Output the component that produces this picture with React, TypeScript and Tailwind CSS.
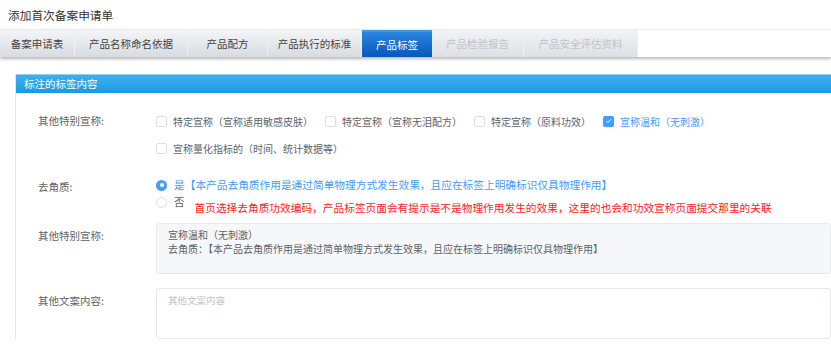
import React from "react";

const tabs: { label: string; w: string; state: "normal" | "active" | "disabled" }[] = [
  { label: "备案申请表", w: "w-[75px]", state: "normal" },
  { label: "产品名称命名依据", w: "w-[113px]", state: "normal" },
  { label: "产品配方", w: "w-[80px]", state: "normal" },
  { label: "产品执行的标准", w: "w-[94px]", state: "normal" },
  { label: "产品标签", w: "w-[70px]", state: "active" },
  { label: "产品检验报告", w: "w-[92px]", state: "disabled" },
  { label: "产品安全评估资料", w: "w-[114px]", state: "disabled" },
];

function Checkbox({ checked, label }: { checked?: boolean; label: string }) {
  return (
    <div className="flex items-center gap-[6px]">
      {checked ? (
        <span className="w-[11px] h-[11px] rounded-[2px] bg-[#409eff] flex items-center justify-center">
          <svg width="7" height="6" viewBox="0 0 7 6">
            <path d="M1 3 L2.8 4.7 L6 1.2" stroke="white" strokeWidth="1" fill="none" />
          </svg>
        </span>
      ) : (
        <span className="w-[11px] h-[11px] rounded-[2px] border border-[#dcdfe6] bg-white" />
      )}
      <span className={checked ? "text-[#409eff]" : "text-[#606266]"}>{label}</span>
    </div>
  );
}

export default function App() {
  return (
    <div
      className="w-[831px] h-[354px] overflow-hidden bg-white"
      style={{ fontFamily: '"Noto Sans CJK SC", "Noto Sans", sans-serif' }}
    >
      <div className="h-[29px] pl-[8px] flex items-center text-[11.7px] text-[#333]">添加首次备案申请单</div>
      <div className="h-[28px] flex border-t border-[#ececec] shadow-[0_2px_3px_rgba(0,0,0,0.28)]">
        {tabs.map((t) => (
          <div
            key={t.label}
            className={
              t.state === "active"
                ? `${t.w} flex items-center justify-center text-[10.5px] text-white bg-gradient-to-b from-[#2a86dc] to-[#0756bd] border-t-2 border-[#3a9ae8]`
                : t.state === "disabled"
                ? `${t.w} flex items-center justify-center text-[10.5px] text-[#bfc3c8] bg-gradient-to-b from-[#f1f3f6] to-[#dde0e4] border-r border-[#eef0f3]`
                : `${t.w} flex items-center justify-center text-[10.5px] text-[#444] bg-gradient-to-b from-[#f4f5f7] to-[#d8dbe0] border-r border-[#eef0f3]`
            }
          >
            {t.label}
          </div>
        ))}
        <div className="flex-1 bg-white" />
      </div>

      <div className="mt-[17px] ml-[15px] border-l border-[#e3e6ea]">
        <div className="h-[19px] flex items-center pl-[8px] text-[10.5px] text-white bg-gradient-to-b from-[#3eaeee] to-[#179be2] border-t border-[#8fd0f3]">
          标注的标签内容
        </div>

        <div className="pl-[22px] text-[10px]">
          {/* row 1 */}
          <div className="flex mt-[18px]">
            <div className="w-[118px] h-[20px] flex items-center text-[10.5px] text-[#606266]">其他特别宣称:</div>
            <div className="flex flex-col gap-[7px]">
              <div className="h-[20px] flex items-center gap-[12px]">
                <Checkbox label="特定宣称（宣称适用敏感皮肤）" />
                <Checkbox label="特定宣称（宣称无泪配方）" />
                <Checkbox label="特定宣称（原料功效）" />
                <Checkbox checked label="宣称温和（无刺激）" />
              </div>
              <div className="h-[20px] flex items-center">
                <Checkbox label="宣称量化指标的（时间、统计数据等）" />
              </div>
            </div>
          </div>

          {/* row 2 */}
          <div className="flex mt-[19px]">
            <div className="w-[118px] h-[16px] pt-[3px] flex items-center text-[10.5px] text-[#606266]">去角质:</div>
            <div className="flex flex-col gap-[1px]">
              <div className="h-[16px] flex items-center gap-[7px]">
                <span className="w-[11px] h-[11px] rounded-full bg-[#409eff] flex items-center justify-center">
                  <span className="w-[4px] h-[4px] rounded-full bg-white" />
                </span>
                <span className="text-[10.7px] text-[#409eff]">
                  是【本产品去角质作用是通过简单物理方式发生效果，且应在标签上明确标识仅具物理作用】
                </span>
              </div>
              <div className="flex items-start">
                <div className="h-[16px] flex items-center gap-[7px]">
                  <span className="w-[11px] h-[11px] rounded-full border border-[#dcdfe6] bg-white" />
                  <span className="text-[10.5px] text-[#606266]">否</span>
                </div>
                <span className="ml-[10px] pt-[6px] leading-[16px] text-[10.7px] text-[#ff1a1a]">
                  首页选择去角质功效编码，产品标签页面会有提示是不是物理作用发生的效果，这里的也会和功效宣称页面提交那里的关联
                </span>
              </div>
            </div>
          </div>

          {/* row 3 */}
          <div className="flex mt-[7px]">
            <div className="w-[118px] pt-[6px] leading-[13px] text-[10.5px] text-[#606266]">其他特别宣称:</div>
            <div className="flex-1 h-[51px] rounded-[3px] bg-[#f5f7fa] border border-[#e6e9ee] pl-[11px] pt-[4px] text-[10px] leading-[14px] text-[#606266]">
              <div>宣称温和（无刺激）</div>
              <div>去角质：【本产品去角质作用是通过简单物理方式发生效果，且应在标签上明确标识仅具物理作用】</div>
            </div>
          </div>

          {/* row 4 */}
          <div className="flex mt-[14px]">
            <div className="w-[118px] pt-[6px] leading-[13px] text-[10.5px] text-[#606266]">其他文案内容:</div>
            <div className="flex-1 h-[51px] rounded-[3px] bg-white border border-[#e4e7ed] pl-[11px] pt-[5px] text-[9.5px] leading-[13px] text-[#c0c4cc]">
              其他文案内容
            </div>
          </div>
        </div>
      </div>
    </div>
  );
}
